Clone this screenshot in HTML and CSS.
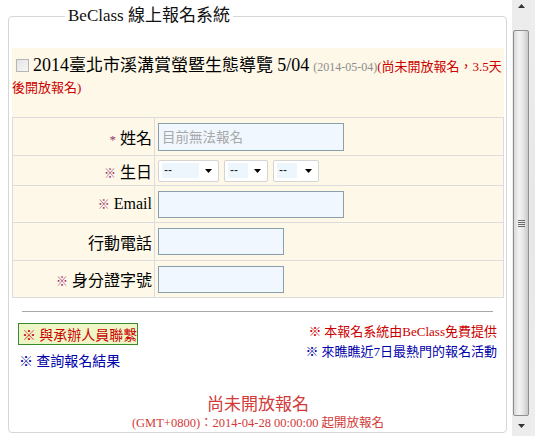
FILE: index.html
```html
<!DOCTYPE html>
<html lang="zh-Hant">
<head>
<meta charset="utf-8">
<title>BeClass 線上報名系統</title>
<link rel="stylesheet" href="styles.css">
</head>
<body>
<div class="window">
  <div class="page">
    <fieldset class="box">
      <legend class="legend">BeClass 線上報名系統</legend>
      <div class="panel">
        <div class="title"><span class="chk"></span><span class="name"><span class="num">2014</span>臺北市溪溝賞螢暨生態導覽 <span class="num">5/04</span></span> <span class="date">(2014-05-04)</span><span class="status">(尚未開放報名，3.5天<br>後開放報名)</span></div>
        <table class="form">
          <tr class="r1">
            <td class="lbl"><span class="star">*</span> 姓名</td>
            <td class="fld"><div class="inp wide tall ph">目前無法報名</div></td>
          </tr>
          <tr class="r2">
            <td class="lbl"><span class="mark">※</span> 生日</td>
            <td class="fld">
              <div class="sels">
                <div class="sel s1"><span class="val v1">--</span><svg class="arr" width="7" height="4" viewBox="0 0 7 4"><path d="M0 0H7L3.5 4Z" fill="#000"/></svg></div>
                <div class="sel s2"><span class="val v2">--</span><svg class="arr" width="7" height="4" viewBox="0 0 7 4"><path d="M0 0H7L3.5 4Z" fill="#000"/></svg></div>
                <div class="sel s3"><span class="val v2">--</span><svg class="arr" width="7" height="4" viewBox="0 0 7 4"><path d="M0 0H7L3.5 4Z" fill="#000"/></svg></div>
              </div>
            </td>
          </tr>
          <tr class="r3">
            <td class="lbl"><span class="mark">※</span> <span class="latin">Email</span></td>
            <td class="fld"><div class="inp wide"></div></td>
          </tr>
          <tr class="r4">
            <td class="lbl">行動電話</td>
            <td class="fld"><div class="inp short"></div></td>
          </tr>
          <tr class="r5">
            <td class="lbl"><span class="mark">※</span> 身分證字號</td>
            <td class="fld"><div class="inp short"></div></td>
          </tr>
        </table>
      </div>
      <div class="rule"></div>
      <div class="links">
        <div class="left">
          <div class="contact">※ 與承辦人員聯繫</div>
          <div class="query">※ <span class="ql">查詢報名結果</span></div>
        </div>
        <div class="right">
          <div class="free">※ 本報名系統由<span class="latin">BeClass</span>免費提供</div>
          <div class="hot">※ 來瞧瞧近<span class="latin">7</span>日最熱門的報名活動</div>
        </div>
      </div>
      <div class="notice">
        <div class="big">尚未開放報名</div>
        <div class="small"><span class="latin">(GMT+0800)</span>：<span class="latin">2014-04-28 00:00:00</span> 起開放報名</div>
      </div>
    </fieldset>
  </div>
  <div class="scrollbar">
    <div class="up"><svg width="7" height="4" viewBox="0 0 7 4"><path d="M3.5 0L7 4H0Z" fill="#333"/></svg></div>
    <div class="thumb"><div class="grip"><i></i><i></i><i></i><i></i></div></div>
    <div class="down"><svg width="7" height="4" viewBox="0 0 7 4"><path d="M0 0H7L3.5 4Z" fill="#333"/></svg></div>
  </div>
  <div class="edge"></div>
</div>
</body>
</html>
```
FILE: styles.css
```css
html, body {
  margin: 0;
  padding: 0;
  background: #fff;
}
body {
  font-family: "Liberation Serif", "Noto Sans CJK TC", serif;
  color: #000;
}
.window {
  display: flex;
  width: 535px;
  height: 436px;
  overflow: hidden;
}
.page {
  width: 512px;
  flex: none;
}
.box {
  box-sizing: border-box;
  width: 499px;
  margin: 6px 0 0 8px;
  padding: 0 2px 0 3px;
  border: 1px solid #d6d6d6;
  border-radius: 4px;
  min-inline-size: 0;
}
.legend {
  margin-left: 53px;
  padding: 0 3px;
  font-size: 17px;
  line-height: 20px;
  color: #111;
}
.panel {
  margin-top: 22px;
  background: #fdf8e8;
  padding-top: 7px;
}
.title {
  line-height: 20px;
  margin-bottom: 19px;
}
.chk {
  display: inline-block;
  box-sizing: border-box;
  width: 13px;
  height: 13px;
  margin: 3px 3px 0 4px;
  vertical-align: -1px;
  border: 1px solid #b5b5b5;
  background: linear-gradient(135deg, #e4e4e4, #f6f6f6);
}
.name {
  font-size: 17px;
  margin-left: 1px;
}
.num {
  font-size: 18px;
}
.date {
  font-size: 12px;
  color: #8c8c8c;
}
.status {
  font-size: 13px;
  color: #cc0000;
}
.form {
  width: 100%;
  border-collapse: collapse;
  border: 1px solid #dcdcdc;
  background: #fdf8e8;
}
.form td {
  border: 1px solid #dcdcdc;
  padding: 0;
  vertical-align: middle;
}
.r1 { height: 38px; }
.r2 { height: 30px; }
.r3 { height: 37px; }
.r4 { height: 38px; }
.r5 { height: 37px; }
.lbl {
  width: 139px;
  text-align: right;
  padding-right: 2px !important;
  font-size: 16px;
  white-space: nowrap;
}
.star {
  color: #99336a;
  font-size: 13px;
}
.mark {
  color: #99336a;
  font-size: 12px;
}
.latin {
  font-family: "Liberation Serif", serif;
}
.fld {
  padding-left: 3px !important;
}
.inp {
  box-sizing: border-box;
  height: 27px;
  border: 1px solid #8a9eab;
  background: #f0f7fe;
  font-family: "Noto Sans CJK TC", sans-serif;
  font-size: 13.5px;
  line-height: 25px;
  padding-left: 3px;
  color: #a8a8a8;
}
.tall { height: 28px; }
.wide { width: 186px; }
.short { width: 126px; }
.sels {
  display: flex;
  gap: 5px;
}
.sel {
  box-sizing: border-box;
  display: flex;
  align-items: center;
  height: 22px;
  border: 1px solid #d4d4d4;
  border-radius: 2px;
  background: #fff;
  padding-left: 3px;
}
.s1 { width: 61px; }
.s2 { width: 44px; }
.s3 { width: 46px; }
.val {
  display: block;
  height: 15px;
  line-height: 15px;
  background: #eef6fd;
  font-family: "Liberation Sans", sans-serif;
  font-size: 12px;
  color: #222;
  padding-left: 2px;
  box-sizing: border-box;
}
.v1 { width: 37px; }
.v2 { width: 20px; }
.arr {
  margin-left: auto;
  margin-right: 6px;
}
.rule {
  margin: 13px 11px 0 10px;
  border-top: 1px solid #a8a8a8;
}
.links {
  display: flex;
  justify-content: space-between;
  margin-top: 11px;
}
.left {
  margin-left: 6px;
}
.contact {
  box-sizing: border-box;
  width: 120px;
  height: 22px;
  border: 1px solid #3b8a2e;
  background: #eef6c8;
  color: #cc0000;
  font-size: 14px;
  line-height: 20px;
  padding-left: 3px;
  font-family: "Noto Sans CJK TC", sans-serif;
  white-space: nowrap;
}
.query {
  margin-top: 6px;
  margin-left: 1px;
  font-size: 14px;
  line-height: 19px;
  color: #0000aa;
  font-family: "Noto Sans CJK TC", sans-serif;
}
.right {
  margin-right: 7px;
  margin-top: -2px;
  text-align: right;
  font-size: 13px;
  line-height: 19px;
  font-family: "Noto Sans CJK TC", sans-serif;
}
.free { color: #cc0000; }
.hot { color: #0000aa; }
.notice {
  margin-top: 22px;
  text-align: center;
  color: #d23a3a;
}
.big {
  font-family: "Noto Sans CJK TC", sans-serif;
  font-size: 17px;
  line-height: 22px;
}
.small {
  font-size: 12.5px;
  line-height: 18px;
}
.scrollbar {
  width: 18px;
  flex: none;
  height: 436px;
  background: #ececec;
  display: flex;
  flex-direction: column;
  align-items: center;
}
.up {
  height: 30px;
  display: flex;
  justify-content: center;
  padding-top: 4px;
  box-sizing: border-box;
}
.up svg, .down svg { display: block; }
.thumb {
  box-sizing: border-box;
  width: 16px;
  height: 386px;
  border: 1px solid #8f8f8f;
  border-radius: 2px;
  background: linear-gradient(90deg, #d8d8d8 0%, #f3f3f3 35%, #eaeaea 60%, #c9c9c9 100%);
  display: flex;
  align-items: center;
  justify-content: center;
}
.grip {
  display: flex;
  flex-direction: column;
  gap: 1px;
}
.grip i {
  display: block;
  width: 7px;
  height: 1px;
  background: #6a6a6a;
}
.down {
  height: 20px;
  display: flex;
  justify-content: center;
  align-items: center;
}
.edge {
  flex: 1;
  background: linear-gradient(180deg, #eeeeee, #e6e6e6 50%, #eeeeee);
}
```
